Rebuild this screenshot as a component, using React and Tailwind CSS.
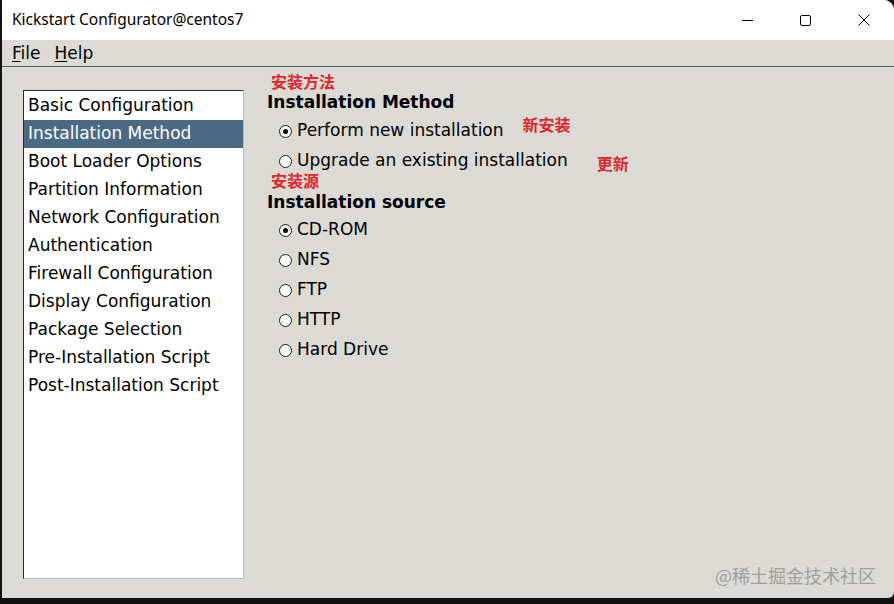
import React, { useState } from 'react';

const sections = [
  'Basic Configuration',
  'Installation Method',
  'Boot Loader Options',
  'Partition Information',
  'Network Configuration',
  'Authentication',
  'Firewall Configuration',
  'Display Configuration',
  'Package Selection',
  'Pre-Installation Script',
  'Post-Installation Script',
];

const Radio = ({ checked, label, onClick, note }) => (
  <div className="flex h-[30px] items-center" onClick={onClick}>
    <span className="ml-[278px] flex h-[13px] w-[13px] items-center justify-center rounded-full border border-[#1a1a1a] bg-white">
      {checked && <span className="h-[5px] w-[5px] rounded-full bg-black" />}
    </span>
    <span className="ml-[5px] text-[17px] text-black">{label}</span>
    {note}
  </div>
);

const Note = ({ children, className = '' }) => (
  <span className={`font-bold text-[16px] text-[#e0262b] ${className}`} style={{ fontFamily: '"Noto Sans CJK SC", sans-serif' }}>
    {children}
  </span>
);

const KickstartWindow = () => {
  const [selected, setSelected] = useState(1);
  const [method, setMethod] = useState('new');
  const [source, setSource] = useState('CD-ROM');

  return (
    <div className="h-[604px] w-[894px] overflow-hidden bg-[#111]" style={{ fontFamily: '"DejaVu Sans", sans-serif' }}>
      <div className="ml-[2px] flex h-[598px] flex-col overflow-hidden rounded-tr-[10px] rounded-br-[6px] bg-[#dcdad5]">
        {/* title bar */}
        <div className="flex h-[40px] shrink-0 items-center bg-white">
          <span className="ml-[10px] text-[15.5px] text-black" style={{ fontFamily: '"Noto Sans", sans-serif' }}>
            Kickstart Configurator@centos7
          </span>
          <div className="ml-auto flex h-full items-center">
            <div className="flex h-full w-[58px] items-center justify-center">
              <span className="h-px w-[11px] bg-black" />
            </div>
            <div className="flex h-full w-[58px] items-center justify-center">
              <span className="h-[11px] w-[11px] rounded-[2px] border border-black" />
            </div>
            <div className="flex h-full w-[60px] items-center justify-center">
              <svg width="12" height="12" viewBox="0 0 12 12" stroke="black" strokeWidth="1">
                <path d="M0.5 0.5L11.5 11.5M11.5 0.5L0.5 11.5" />
              </svg>
            </div>
          </div>
        </div>

        {/* menu bar */}
        <div className="flex h-[27px] shrink-0 items-center border-b border-[#5a5a5a] pt-[2px] text-[17px] text-black">
          <span className="ml-[10px]"><span className="underline underline-offset-2">F</span>ile</span>
          <span className="ml-[14px]"><span className="underline underline-offset-2">H</span>elp</span>
        </div>

        <div className="flex flex-1">
          {/* section list */}
          <div className="ml-[21px] mt-[23px] h-[489px] w-[221px] border-l border-t border-[#2c2c2c] border-r-[#bdbdbd] border-b-[#bdbdbd] border-r border-b bg-white pt-[1px]">
            {sections.map((s, i) => (
              <div
                key={s}
                onClick={() => setSelected(i)}
                className={`flex h-[28px] items-center pl-[4px] text-[17px] ${
                  i === selected ? 'bg-[#4b6983] text-white' : 'text-black'
                }`}
              >
                {s}
              </div>
            ))}
          </div>

          {/* install method panel */}
          <div className="-ml-[243px] flex-1 pt-[6px]">
            <div className="ml-[270px] -mt-[1px] h-[18px] leading-[18px]"><Note>安装方法</Note></div>
            <div className="ml-[266px] mt-[1px] text-[17px] font-bold leading-[22px] text-black">Installation Method</div>
            <div className="mt-[3px]">
              <Radio
                checked={method === 'new'}
                onClick={() => setMethod('new')}
                label="Perform new installation"
                note={<Note className="ml-[19px] -mt-[14px]">新安装</Note>}
              />
              <Radio
                checked={method === 'upgrade'}
                onClick={() => setMethod('upgrade')}
                label="Upgrade an existing installation"
                note={<Note className="ml-[29px] mt-[3px]">更新</Note>}
              />
            </div>
            <div className="ml-[270px] -mt-[5px] h-[18px] leading-[18px]"><Note>安装源</Note></div>
            <div className="ml-[266px] mt-[2px] text-[17px] font-bold leading-[22px] text-black">Installation source</div>
            <div className="mt-[2px]">
              {['CD-ROM', 'NFS', 'FTP', 'HTTP', 'Hard Drive'].map((s) => (
                <Radio key={s} checked={source === s} onClick={() => setSource(s)} label={s} />
              ))}
            </div>
          </div>
        </div>

        <div className="flex h-0 justify-end">
          <span
            className="-mt-[36px] mr-[18px] text-[18px] text-[#a0a0a0]"
            style={{ fontFamily: '"Noto Sans CJK SC", sans-serif' }}
          >
            @稀土掘金技术社区
          </span>
        </div>
      </div>
    </div>
  );
};

export default function App() {
  return <KickstartWindow />;
}
